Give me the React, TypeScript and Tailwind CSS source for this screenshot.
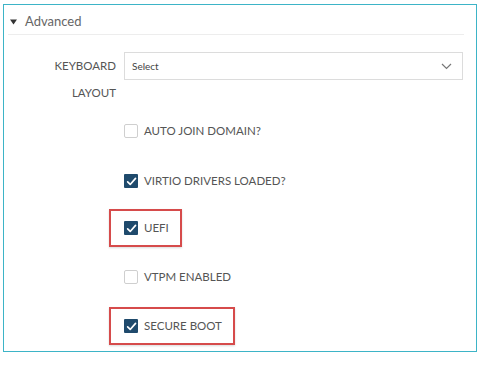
import React from "react";

const font = { fontFamily: '"Lato", "Open Sans", sans-serif' };

function Box({ checked }: { checked: boolean }) {
  if (checked) {
    return (
      <span className="w-[14px] h-[14px] bg-[#1f4a6c] rounded-[1px] flex items-center justify-center shrink-0">
        <svg width="11" height="11" viewBox="0 0 12 12">
          <path d="M1.8 6.4 L4.6 9.2 L10.4 2.6" stroke="white" strokeWidth="1.8" fill="none" strokeLinecap="round" strokeLinejoin="round" />
        </svg>
      </span>
    );
  }
  return <span className="w-[14px] h-[14px] border border-[#cfcfcf] rounded-[2px] bg-white shrink-0" />;
}

function Row({ label, checked, hl, mt }: { label: string; checked: boolean; hl?: boolean; mt: string }) {
  return (
    <div
      className={
        "h-[38px] w-fit flex items-center pl-[13px] pr-[11px] ml-[105px] border-2 " +
        (hl ? "border-[#d64b4b] shadow-[0_1px_2px_rgba(0,0,0,0.15)] " : "border-transparent ") +
        mt
      }
    >
      <Box checked={checked} />
      <span className="ml-[6px] text-[11.5px] text-[#555]">{label}</span>
    </div>
  );
}

export default function App() {
  return (
    <div className="w-[486px] h-[365px] bg-white pt-[4px] pl-[3px]" style={font}>
      <div className="w-[474px] h-[348px] border border-[#3db4c7] bg-white">
        <div className="h-[30px] ml-[4px] mr-[12px] border-b border-[#ededed] flex items-center pt-[4px] pl-[2px]">
          <svg width="7" height="6" viewBox="0 0 7 6" className="mr-[8px]">
            <path d="M0 0.5 L7 0.5 L3.5 5.5 Z" fill="#333" />
          </svg>
          <span className="text-[13px] text-[#666]">Advanced</span>
        </div>
        <div className="flex mt-[17px]">
          <div className="w-[112px] text-right text-[11.5px] leading-[27px] text-[#555]">
            <div>KEYBOARD</div>
            <div>LAYOUT</div>
          </div>
          <div className="ml-[8px] w-[339px] h-[28px] border border-[#dcdcdc] flex items-center justify-between pl-[7px] pr-[10px]">
            <span className="text-[10px] text-[#444]">Select</span>
            <svg width="11" height="7" viewBox="0 0 11 7">
              <path d="M1 1 L5.5 5.5 L10 1" stroke="#777" strokeWidth="1.2" fill="none" />
            </svg>
          </div>
        </div>
        <Row label="AUTO JOIN DOMAIN?" checked={false} mt="mt-[6px]" />
        <Row label="VIRTIO DRIVERS LOADED?" checked={true} mt="mt-[12px]" />
        <Row label="UEFI" checked={true} hl mt="mt-[9px]" />
        <Row label="VTPM ENABLED" checked={false} mt="mt-[11px]" />
        <Row label="SECURE BOOT" checked={true} hl mt="mt-[11px]" />
      </div>
    </div>
  );
}
